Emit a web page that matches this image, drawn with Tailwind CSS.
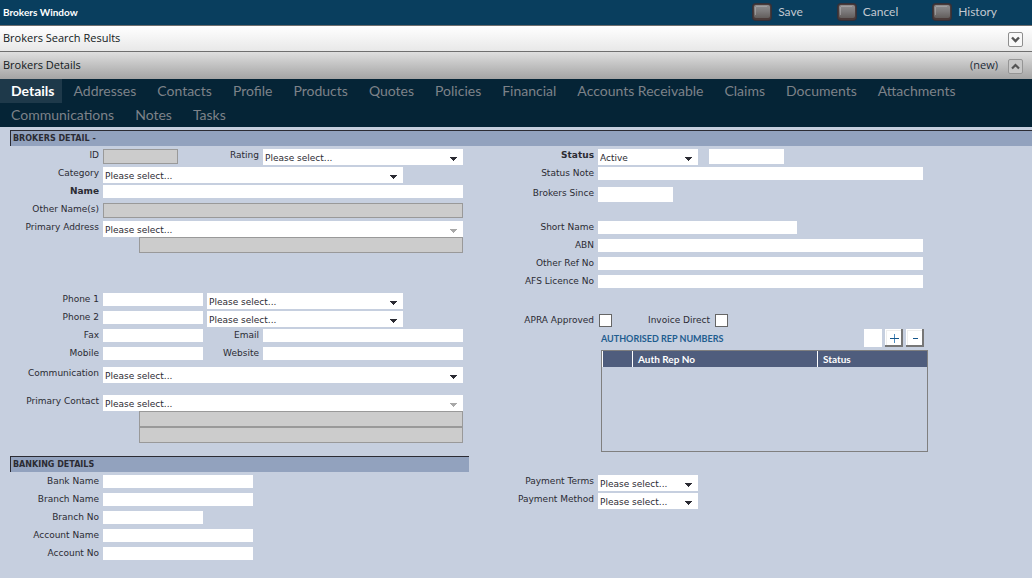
<!DOCTYPE html>
<html lang="en">
<head>
<meta charset="utf-8">
<title>Brokers Window</title>
<script src="https://cdn.jsdelivr.net/npm/@tailwindcss/browser@4"></script>
</head>
<body class="min-h-screen bg-[#c6cfdf] font-['DejaVu_Sans',sans-serif] text-[9px] leading-3 text-[#2b2b33]">
<svg class="absolute size-0" aria-hidden="true">
  <defs>
    <linearGradient id="face" x1="0" y1="0" x2="0" y2="1"><stop offset="0" stop-color="#8f8d8f"/><stop offset=".5" stop-color="#7b797a"/><stop offset="1" stop-color="#625d5c"/></linearGradient>
  </defs>
  <symbol id="arrow" viewBox="0 0 7 4"><path d="M0 0h7v1h-1v1h-1v1h-1v1h-1v-1h-1v-1h-1v-1h-1z" fill="currentColor" shape-rendering="crispEdges"/></symbol>
  <symbol id="knob" viewBox="0 0 20 18"><rect width="20" height="18" rx="4" fill="#33313a"/><rect x="1" y="1" width="18" height="16" rx="3" fill="#4a3b3a"/><rect x="2" y="2" width="16" height="13" rx="2" fill="url(#face)"/><path d="M4 3.500h11M3.500 4v8" stroke="#b0aeb0" stroke-width="1" opacity=".6"/></symbol>
</svg>

<header class="flex h-[25px] items-center justify-between bg-[#093e5e] pb-px pl-[3px] pr-[35px] font-['Lato',sans-serif]">
  <h1 class="text-[10px] font-bold text-white">Brokers Window</h1>
  <div class="flex gap-[34px] text-[12px] leading-4 text-[#c2c8d0]">
    <button type="button" class="flex items-center gap-[6px]"><svg class="h-[18px] w-[20px]"><use href="#knob"/></svg>Save</button>
    <button type="button" class="flex items-center gap-[6px]"><svg class="h-[18px] w-[20px]"><use href="#knob"/></svg>Cancel</button>
    <button type="button" class="flex items-center gap-[6px]"><svg class="h-[18px] w-[20px]"><use href="#knob"/></svg>History</button>
  </div>
</header>

<section class="flex h-[27px] items-start justify-between border-y border-[#6f6f6f] bg-linear-to-b from-white to-[#e8e8e8] pl-[3px] pr-[9px] pt-[6px] font-['Open_Sans',sans-serif] text-[11px] text-[#111820]">
  <h2>Brokers Search Results</h2>
  <button type="button" aria-label="Expand search results" class="flex size-[15px] items-center justify-center rounded-xs border border-[#8e8e8e] bg-[#f8f8f8]"><svg class="h-[7px] w-[9px]" viewBox="0 0 9 7"><path d="M1 1.500l3.500 3.500l3.500-3.500" fill="none" stroke="#555" stroke-width="2.400"/></svg></button>
</section>
<section class="flex h-[27px] items-start justify-between bg-linear-to-b from-[#dfdfdf] to-[#a4a4a4] pl-[3px] pr-[9px] pt-[7px] font-['Open_Sans',sans-serif] text-[11px] text-[#111820]">
  <h2>Brokers Details</h2>
  <div class="flex gap-[10px]">
    <span class="text-[#222b38]">(new)</span>
    <button type="button" aria-label="Collapse details" class="flex size-[15px] items-center justify-center rounded-xs border border-[#959595] bg-[#c8c8c8]"><svg class="h-[7px] w-[9px]" viewBox="0 0 9 7"><path d="M1 5.500l3.500-3.500l3.500 3.500" fill="none" stroke="#555" stroke-width="2.200"/></svg></button>
  </div>
</section>

<nav class="flex flex-wrap gap-x-px bg-[#052436] font-['Lato',sans-serif] text-[14px] leading-6 text-[#7d8289]">
  <a href="#" class="bg-[#1e394a] pl-[11px] pr-[8px] font-bold text-white">Details</a>
  <a href="#" class="px-[10px]">Addresses</a>
  <a href="#" class="px-[10px]">Contacts</a>
  <a href="#" class="px-[10px]">Profile</a>
  <a href="#" class="px-[10px]">Products</a>
  <a href="#" class="px-[10px]">Quotes</a>
  <a href="#" class="px-[10px]">Policies</a>
  <a href="#" class="px-[10px]">Financial</a>
  <a href="#" class="px-[10px]">Accounts Receivable</a>
  <a href="#" class="px-[10px]">Claims</a>
  <a href="#" class="px-[10px]">Documents</a>
  <a href="#" class="px-[10px]">Attachments</a>
  <a href="#" class="pl-[11px] pr-[10px]">Communications</a>
  <a href="#" class="px-[10px]">Notes</a>
  <a href="#" class="px-[10px]">Tasks</a>
</nav>

<main class="pl-[10px] pt-[3px]">
  <h2 class="h-[16px] border-l border-t border-[#2b2b33] bg-[#92a2be] pl-[2px] pt-[2px] text-[8px] font-bold">BROKERS DETAIL -</h2>
  <form class="flex pt-[3px]">
    <div class="w-[459px] shrink-0">
      <div class="flex h-[18px] items-start">
        <label for="id" class="w-[89px] text-right">ID</label>
        <input id="id" disabled class="ml-1 h-[15px] w-[75px] border border-[#999] bg-[#ccc]">
        <label for="rating" class="w-[81px] text-right">Rating</label>
        <div class="relative ml-1 w-[200px]"><select id="rating" class="block h-[16px] w-full appearance-none bg-white pl-[2px] pt-[2px]"><option>Please select...</option></select><svg class="pointer-events-none absolute right-[6px] top-[8px] h-[4px] w-[7px]"><use href="#arrow"/></svg></div>
      </div>
      <div class="flex h-[18px] items-start">
        <label for="category" class="w-[89px] text-right">Category</label>
        <div class="relative ml-1 w-[300px]"><select id="category" class="block h-[16px] w-full appearance-none bg-white pl-[2px] pt-[2px]"><option>Please select...</option></select><svg class="pointer-events-none absolute right-[6px] top-[8px] h-[4px] w-[7px]"><use href="#arrow"/></svg></div>
      </div>
      <div class="flex h-[18px] items-start">
        <label for="name" class="w-[89px] text-right font-bold">Name</label>
        <input id="name" class="ml-1 h-[13px] w-[360px] bg-white">
      </div>
      <div class="flex h-[18px] items-start">
        <label for="other" class="w-[89px] text-right">Other Name(s)</label>
        <input id="other" disabled class="ml-1 h-[15px] w-[360px] border border-[#999] bg-[#ccc]">
      </div>
      <div class="flex items-start">
        <label for="address" class="w-[89px] text-right">Primary Address</label>
        <div class="ml-1 w-[360px]">
          <div class="relative"><select id="address" class="block h-[16px] w-full appearance-none bg-white pl-[2px] pt-[2px]"><option>Please select...</option></select><svg class="pointer-events-none absolute right-[6px] top-[8px] h-[4px] w-[7px] text-[#a8a8a8]"><use href="#arrow"/></svg></div>
          <input disabled aria-label="Primary address text" class="ml-[36px] block h-[16px] w-[324px] border border-[#999] bg-[#ccc]">
        </div>
      </div>
      <div class="mt-[40px] flex h-[18px] items-start">
        <label for="phone1" class="w-[89px] text-right">Phone 1</label>
        <input id="phone1" class="ml-1 h-[13px] w-[100px] bg-white">
        <div class="relative ml-1 w-[196px]"><select aria-label="Phone 1 type" class="block h-[16px] w-full appearance-none bg-white pl-[2px] pt-[2px]"><option>Please select...</option></select><svg class="pointer-events-none absolute right-[6px] top-[8px] h-[4px] w-[7px]"><use href="#arrow"/></svg></div>
      </div>
      <div class="flex h-[18px] items-start">
        <label for="phone2" class="w-[89px] text-right">Phone 2</label>
        <input id="phone2" class="ml-1 h-[13px] w-[100px] bg-white">
        <div class="relative ml-1 w-[196px]"><select aria-label="Phone 2 type" class="block h-[16px] w-full appearance-none bg-white pl-[2px] pt-[2px]"><option>Please select...</option></select><svg class="pointer-events-none absolute right-[6px] top-[8px] h-[4px] w-[7px]"><use href="#arrow"/></svg></div>
      </div>
      <div class="flex h-[18px] items-start">
        <label for="fax" class="w-[89px] text-right">Fax</label>
        <input id="fax" class="ml-1 h-[13px] w-[100px] bg-white">
        <label for="email" class="w-[56px] text-right">Email</label>
        <input id="email" type="email" class="ml-1 h-[13px] w-[200px] bg-white">
      </div>
      <div class="flex h-[20px] items-start">
        <label for="mobile" class="w-[89px] text-right">Mobile</label>
        <input id="mobile" class="ml-1 h-[13px] w-[100px] bg-white">
        <label for="website" class="w-[56px] text-right">Website</label>
        <input id="website" class="ml-1 h-[13px] w-[200px] bg-white">
      </div>
      <div class="flex h-[28px] items-start">
        <label for="comm" class="w-[89px] text-right">Communication</label>
        <div class="relative ml-1 w-[360px]"><select id="comm" class="block h-[16px] w-full appearance-none bg-white pl-[2px] pt-[2px]"><option>Please select...</option></select><svg class="pointer-events-none absolute right-[6px] top-[8px] h-[4px] w-[7px]"><use href="#arrow"/></svg></div>
      </div>
      <div class="flex items-start">
        <label for="contact" class="w-[89px] text-right">Primary Contact</label>
        <div class="ml-1 w-[360px]">
          <div class="relative"><select id="contact" class="block h-[16px] w-full appearance-none bg-white pl-[2px] pt-[2px]"><option>Please select...</option></select><svg class="pointer-events-none absolute right-[6px] top-[8px] h-[4px] w-[7px] text-[#a8a8a8]"><use href="#arrow"/></svg></div>
          <input disabled aria-label="Primary contact line 1" class="ml-[36px] block h-[16px] w-[324px] border border-[#999] bg-[#ccc]">
          <input disabled aria-label="Primary contact line 2" class="ml-[36px] block h-[16px] w-[324px] border border-[#999] bg-[#ccc]">
        </div>
      </div>
      <h2 class="mb-[3px] mt-[13px] h-[16px] border-l border-t border-[#2b2b33] bg-[#92a2be] pl-[2px] pt-[2px] text-[8px] font-bold">BANKING DETAILS</h2>
      <div class="flex h-[18px] items-start">
        <label for="bank" class="w-[89px] text-right">Bank Name</label>
        <input id="bank" class="ml-1 h-[13px] w-[150px] bg-white">
      </div>
      <div class="flex h-[18px] items-start">
        <label for="branch" class="w-[89px] text-right">Branch Name</label>
        <input id="branch" class="ml-1 h-[13px] w-[150px] bg-white">
      </div>
      <div class="flex h-[18px] items-start">
        <label for="branchno" class="w-[89px] text-right">Branch No</label>
        <input id="branchno" class="ml-1 h-[13px] w-[100px] bg-white">
      </div>
      <div class="flex h-[18px] items-start">
        <label for="accname" class="w-[89px] text-right">Account Name</label>
        <input id="accname" class="ml-1 h-[13px] w-[150px] bg-white">
      </div>
      <div class="flex h-[18px] items-start">
        <label for="accno" class="w-[89px] text-right">Account No</label>
        <input id="accno" class="ml-1 h-[13px] w-[150px] bg-white">
      </div>
    </div>

    <div class="flex-1">
      <div class="flex h-[18px] items-start">
        <label for="status" class="w-[125px] text-right font-bold">Status</label>
        <div class="relative ml-1 w-[100px]"><select id="status" class="block h-[16px] w-full appearance-none bg-white pl-[2px] pt-[2px]"><option>Active</option></select><svg class="pointer-events-none absolute right-[6px] top-[8px] h-[4px] w-[7px]"><use href="#arrow"/></svg></div>
        <input aria-label="Status date" class="ml-[11px] h-[15px] w-[75px] bg-white">
      </div>
      <div class="flex h-[20px] items-start">
        <label for="note" class="w-[125px] text-right">Status Note</label>
        <input id="note" class="ml-1 h-[13px] w-[325px] bg-white">
      </div>
      <div class="flex h-[34px] items-start">
        <label for="since" class="w-[125px] text-right">Brokers Since</label>
        <input id="since" class="ml-1 h-[15px] w-[75px] bg-white">
      </div>
      <div class="flex h-[18px] items-start">
        <label for="short" class="w-[125px] text-right">Short Name</label>
        <input id="short" class="ml-1 h-[13px] w-[199px] bg-white">
      </div>
      <div class="flex h-[18px] items-start">
        <label for="abn" class="w-[125px] text-right">ABN</label>
        <input id="abn" class="ml-1 h-[13px] w-[325px] bg-white">
      </div>
      <div class="flex h-[18px] items-start">
        <label for="ref" class="w-[125px] text-right">Other Ref No</label>
        <input id="ref" class="ml-1 h-[13px] w-[325px] bg-white">
      </div>
      <div class="flex h-[39px] items-start">
        <label for="afs" class="w-[125px] text-right">AFS Licence No</label>
        <input id="afs" class="ml-1 h-[13px] w-[325px] bg-white">
      </div>
      <div class="flex h-[15px] items-start">
        <label for="apra" class="w-[125px] text-right">APRA Approved</label>
        <input id="apra" type="checkbox" class="ml-[5px] size-[13px] appearance-none border border-[#666] bg-white checked:bg-[#15568c]">
        <label for="direct" class="w-[98px] text-right">Invoice Direct</label>
        <input id="direct" type="checkbox" class="ml-[5px] size-[13px] appearance-none border border-[#666] bg-white checked:bg-[#15568c]">
      </div>
      <div class="ml-[132px] w-[327px]">
        <div class="flex h-[21px] items-start justify-between pr-1">
          <h3 class="pt-[4px] font-['Lato',sans-serif] text-[9px] font-bold text-[#1f5d8f]">AUTHORISED REP NUMBERS</h3>
          <div class="flex gap-[3px]">
            <button type="button" aria-label="Blank" class="size-[18px] bg-white"></button>
            <button type="button" aria-label="Add" class="flex size-[18px] items-center justify-center border-b-2 border-r-2 border-[#777] bg-white shadow-[inset_1px_1px_0_#fff,inset_2px_2px_0_#eee]"><svg class="ml-[2px] mt-[3px] size-[9px]" viewBox="0 0 9 9" shape-rendering="crispEdges"><path d="M4 0h1v9h-1z" fill="#4d8cc0"/><path d="M0 4h9v1h-9z" fill="#15568c"/></svg></button>
            <button type="button" aria-label="Remove" class="flex size-[18px] items-center justify-center border-b-2 border-r-2 border-[#777] bg-white shadow-[inset_1px_1px_0_#fff,inset_2px_2px_0_#eee]"><svg class="ml-[2px] mt-[2px] h-px w-[5px]" viewBox="0 0 5 1"><path d="M0 0h5v1h-5z" fill="#15568c"/></svg></button>
          </div>
        </div>
        <div class="h-[102px] border border-[#7f7f7f]">
          <table class="w-full table-fixed border-collapse font-['Lato',sans-serif] text-[10px] text-white">
            <thead><tr class="h-[16px] bg-[#4f5d7d] text-left leading-3">
              <th class="w-[30px] border-l border-white p-0"></th>
              <th class="w-[185px] border-l border-white p-0 pl-[5px]">Auth Rep No</th>
              <th class="border-l border-white p-0 pl-[5px]">Status</th>
            </tr></thead>
          </table>
        </div>
      </div>
      <div class="mt-[23px] flex h-[18px] items-start">
        <label for="terms" class="w-[125px] text-right">Payment Terms</label>
        <div class="relative ml-1 w-[100px]"><select id="terms" class="block h-[16px] w-full appearance-none bg-white pl-[2px] pt-[2px]"><option>Please select...</option></select><svg class="pointer-events-none absolute right-[6px] top-[8px] h-[4px] w-[7px]"><use href="#arrow"/></svg></div>
      </div>
      <div class="flex h-[18px] items-start">
        <label for="method" class="w-[125px] text-right">Payment Method</label>
        <div class="relative ml-1 w-[100px]"><select id="method" class="block h-[16px] w-full appearance-none bg-white pl-[2px] pt-[2px]"><option>Please select...</option></select><svg class="pointer-events-none absolute right-[6px] top-[8px] h-[4px] w-[7px]"><use href="#arrow"/></svg></div>
      </div>
    </div>
  </form>
</main>
</body>
</html>
